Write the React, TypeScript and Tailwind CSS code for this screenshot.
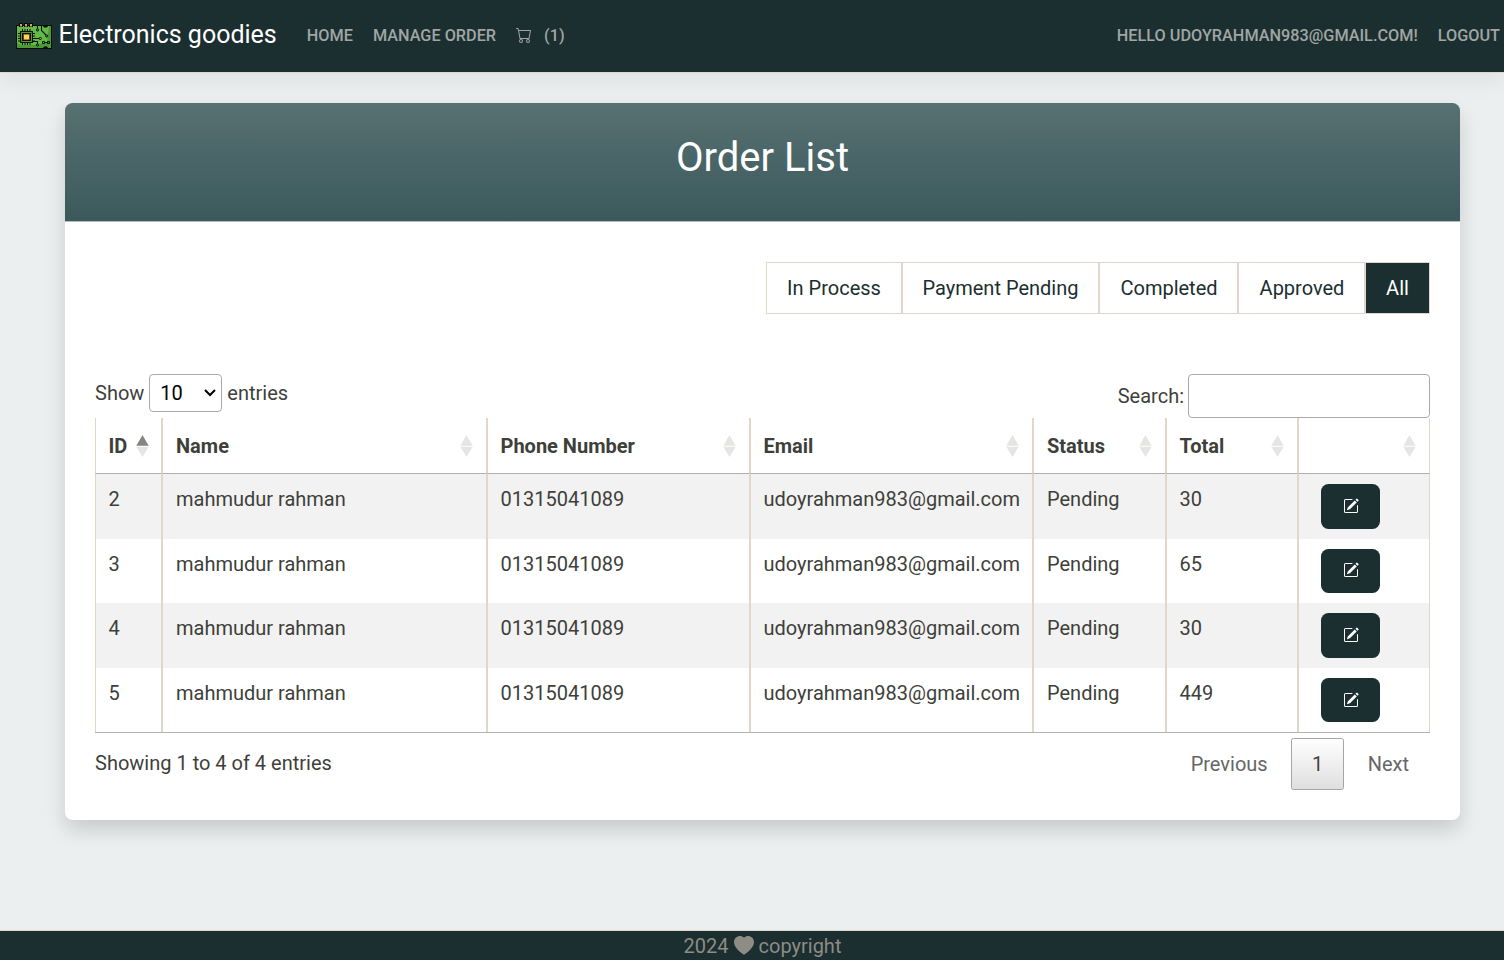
import React from "react";
import { BsCart, BsHeartFill, BsPencilSquare } from "react-icons/bs";

type Order = { id: number; name: string; phone: string; email: string; status: string; total: number };

const orders: Order[] = [
  { id: 2, name: "mahmudur rahman", phone: "01315041089", email: "udoyrahman983@gmail.com", status: "Pending", total: 30 },
  { id: 3, name: "mahmudur rahman", phone: "01315041089", email: "udoyrahman983@gmail.com", status: "Pending", total: 65 },
  { id: 4, name: "mahmudur rahman", phone: "01315041089", email: "udoyrahman983@gmail.com", status: "Pending", total: 30 },
  { id: 5, name: "mahmudur rahman", phone: "01315041089", email: "udoyrahman983@gmail.com", status: "Pending", total: 449 },
];

const columns = ["ID", "Name", "Phone Number", "Email", "Status", "Total", ""];

const filters = [
  { label: "In Process", width: "w-[136px]" },
  { label: "Payment Pending", width: "w-[197px]" },
  { label: "Completed", width: "w-[139px] pl-px" },
  { label: "Approved", width: "w-[127px] pl-px" },
];

function BoardLogo() {
  return (
    <svg width="36" height="26" viewBox="0 0 36 26">
      <path d="M0 2h36v24H0z" fill="#050b08" />
      <path d="M1 3h34v22H1z" fill="#62bb46" />
      <path d="M1 20l5 2h14l11-3 2-16h2v22H1z" fill="#4b9a36" />
      <path d="M3 0h4v4H3zM8 0h4v4H8zM13 0h4v4h-4z" fill="#050b08" />
      <path d="M4 1h2v2.500H4zM9 1h2v2.500H9zM14 1h2v2.500h-2z" fill="#d9a441" />
      <path d="M26 2h7v1h-1l-1 1.500h-3L27 3h-1zM26 26v-1h1l1-1.500h3l1 1.500h1v1z" fill="#050b08" />
      <path d="M6.500 6v16M9 6v16M11.500 6v16M14 6v16M2 10.500h17M2 13h17M2 15.500h17M2 18h17" fill="none" stroke="#0a120b" />
      <path d="M4 8h13v12H4z" fill="#0a120b" />
      <path d="M5.500 9.500h10v9h-10z" fill="none" stroke="#62913b" />
      <path d="M7.500 11h6v6h-6z" fill="#b57a22" />
      <path d="M8 12h5v4H8z" fill="#ffd35c" />
      <path d="M21.500 3v3M25.500 3v4.500l4.500 4.500M17 15.500h6M17 18.500h4.500V21" fill="none" stroke="#0a120b" strokeWidth="1.1" />
      <circle cx="21.500" cy="7" r="1.100" fill="#62bb46" stroke="#0a120b" />
      <circle cx="30.700" cy="13" r="1.100" fill="#62bb46" stroke="#0a120b" />
      <circle cx="24.300" cy="15.500" r="1.100" fill="#d9a441" stroke="#0a120b" />
      <circle cx="21.500" cy="22" r="1.100" fill="#62bb46" stroke="#0a120b" />
      <path d="M26.500 18.500h2v2h-2zM31.500 18.500h2v2h-2zM28.500 19.500h3" stroke="#0a120b" fill="none" />
    </svg>
  );
}

function SortArrows({ ascending }: { ascending: boolean }) {
  return (
    <svg width="13" height="22" viewBox="0 0 13 22" className="shrink-0">
      <path d="M0.300 10.700L6.500 0l6.200 10.700z" fill={ascending ? "#858583" : "#e5e5e4"} />
      <path d="M0.300 11.700h12.400L6.500 22z" fill="#e5e5e4" />
    </svg>
  );
}

function Navbar() {
  return (
    <header className="relative flex h-[73px] shrink-0 items-center border-b border-[#dfd7ca] bg-[#1b2e30] pb-px pl-4 pr-1 font-medium shadow-[0_10px_20px_rgba(0,0,0,0.05)]">
      <a className="flex items-center gap-[6.500px] text-[25px] font-normal leading-[38px] text-white">
        <BoardLogo />
        <span className="pb-[2px]">Electronics goodies</span>
      </a>
      <nav className="ml-[30px] flex flex-1 items-center gap-5 text-[16.25px] leading-6 text-[#a0a6a3]">
        <a>HOME</a>
        <a>MANAGE ORDER</a>
        <a className="flex items-center gap-3">
          <BsCart className="mb-[2px] size-4" />
          <span>(1)</span>
        </a>
        <a className="ml-auto">HELLO UDOYRAHMAN983@GMAIL.COM!</a>
        <a>LOGOUT</a>
      </nav>
    </header>
  );
}

function headerCell(i: number) {
  if (i === 0) return "border-l pl-[12.500px] pr-[12.500px]";
  if (i === 6) return "border-l-2 border-r border-r-[#dfd7ca] pl-[12.500px] pr-[13px]";
  if (i === 1 || i === 4) return "border-l-2 pl-[13px] pr-[13px]";
  return "border-l-2 pl-[12.500px] pr-[13px]";
}

function OrderTable() {
  return (
    <table className="w-[1335px] table-fixed border-separate border-spacing-0 border-b border-[#b2b2b0] text-left">
      <colgroup>
        <col className="w-[66px]" />
        <col className="w-[325px]" />
        <col className="w-[263px]" />
        <col className="w-[283px]" />
        <col className="w-[133px]" />
        <col className="w-[132px]" />
        <col className="w-[133px]" />
      </colgroup>
      <thead>
        <tr className="h-[56px]">
          {columns.map((name, i) => (
            <th key={i} className={"border-b border-b-[#b0b0ae] border-l-[#dfd7ca] p-0 font-bold " + headerCell(i)}>
              <div className="flex items-center justify-between whitespace-nowrap">
                <span>{name}</span>
                <SortArrows ascending={i === 0} />
              </div>
            </th>
          ))}
        </tr>
      </thead>
      <tbody>
        {orders.map((o) => (
          <tr key={o.id} className="h-[64.6px] align-top odd:bg-[#f2f2f2]">
            <td className="border-l border-[#dfd7ca] p-0 pl-[12.500px] pt-[10px]">{o.id}</td>
            <td className="border-l-2 border-[#dfd7ca] p-0 pl-[13px] pt-[10px]">{o.name}</td>
            <td className="border-l-2 border-[#dfd7ca] p-0 pl-[12.500px] pt-[10px]">{o.phone}</td>
            <td className="border-l-2 border-[#dfd7ca] p-0 pl-[12.500px] pt-[10px]">{o.email}</td>
            <td className="border-l-2 border-[#dfd7ca] p-0 pl-[13px] pt-[10px]">{o.status}</td>
            <td className="border-l-2 border-[#dfd7ca] p-0 pl-[12.500px] pt-[10px]">{o.total}</td>
            <td className="border-l-2 border-r border-[#dfd7ca] p-0 pl-[22px] pt-[10px]">
              <button className="flex h-[44.500px] w-[59px] items-center justify-center rounded-[7.500px] bg-[#1b2e30] pb-px text-white">
                <BsPencilSquare className="size-4" />
              </button>
            </td>
          </tr>
        ))}
      </tbody>
    </table>
  );
}

export default function App() {
  return (
    <div className="flex h-[960px] w-full flex-col overflow-hidden bg-[#ebeff0] font-['Roboto',sans-serif] text-[20px] leading-[30px] text-[#3e3f3a]">
      <Navbar />
      <main className="flex-1 pl-[65px] pt-[30px]">
        <section className="h-[717px] w-[1395px] overflow-hidden rounded-[7.500px] bg-white shadow-[0_10px_20px_rgba(0,0,0,0.15)]">
          <div className="flex h-[119px] items-center justify-center border-b border-[#b0bfbf] bg-linear-to-b from-[#587173] to-[#3b595b] pb-[8px] text-[40px] leading-[48px] text-white">
            <h1>Order List</h1>
          </div>
          <div className="px-[30px] pt-10">
            <div className="flex justify-end">
              <ul className="flex h-[52px] w-[664px] border border-[#dfd7ca] text-[#1b2e30]">
                {filters.map((f) => (
                  <li key={f.label} className={"flex items-center justify-center border-r-2 border-[#dfd7ca] " + f.width}>
                    {f.label}
                  </li>
                ))}
                <li className="flex flex-1 items-center justify-center bg-[#1b2e30] text-white">All</li>
              </ul>
            </div>
            <div className="mt-[60px] flex h-[44px] items-start justify-between">
              <label className="flex items-center">
                Show
                <span className="ml-[5px] mr-[5px] flex h-[38px] w-[73px] items-center justify-between rounded-[4px] border border-[#aaa] pl-[10px] pr-[5px] text-black">
                  10
                  <svg width="12" height="8" viewBox="0 0 12 8" fill="none" stroke="#000" strokeWidth="2">
                    <path d="M1 1l5 5 5-5" />
                  </svg>
                </span>
                entries
              </label>
              <label className="flex items-center">
                Search:
                <input className="ml-1 h-11 w-[242px] rounded-[4px] border border-[#aaa] bg-white" />
              </label>
            </div>
            <OrderTable />
            <div className="flex items-start justify-between pt-[5px]">
              <span className="pt-[10px]">Showing 1 to 4 of 4 entries</span>
              <div className="flex h-[52px] items-center text-[#666]">
                <span className="pl-[21px] pr-[20px]">Previous</span>
                <span className="mx-[3px] flex h-[52px] w-[53px] items-center justify-center rounded-[2.500px] border border-[#a5a5a5] bg-linear-to-b from-white to-[#dfdfdf] pl-px text-[#444]">1</span>
                <span className="px-[21px]">Next</span>
              </div>
            </div>
          </div>
        </section>
      </main>
      <footer className="flex h-[30px] shrink-0 items-center justify-center gap-[5px] border-t border-[#dfd7ca] bg-[#1b2e30] pl-[21px] text-[#8e8c84]">
        <span>2024</span>
        <BsHeartFill className="size-5" />
        <span>copyright</span>
      </footer>
    </div>
  );
}
